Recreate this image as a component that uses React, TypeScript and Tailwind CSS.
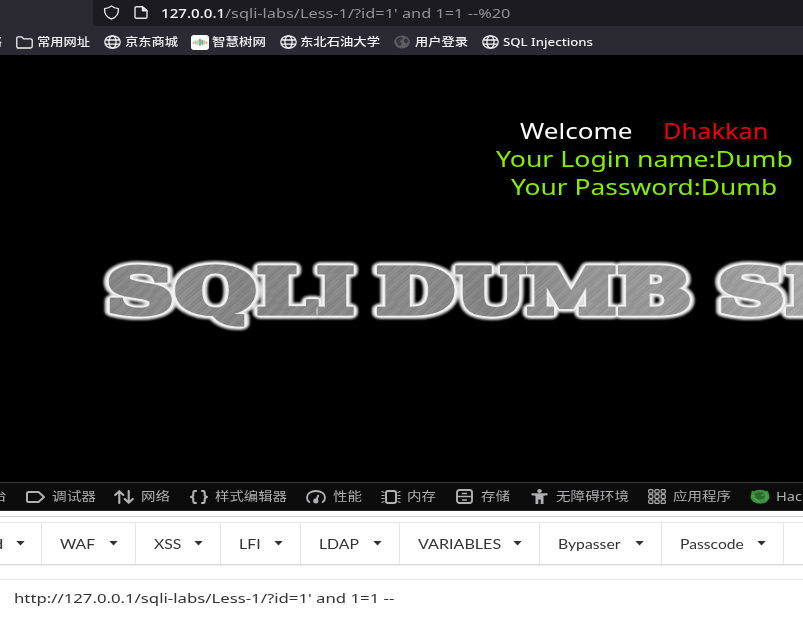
import { useLayoutEffect, useRef, useState, type ReactNode } from 'react';

/* Text stretched horizontally so that it fills exactly `w` pixels. */
function Fit({ w, className = '', children }: { w: number; className?: string; children: ReactNode }) {
  const ref = useRef<HTMLSpanElement>(null);
  const [scale, setScale] = useState(1);
  useLayoutEffect(() => {
    if (ref.current) setScale(w / ref.current.offsetWidth);
  }, [w]);
  return (
    <span className="block shrink-0" style={{ width: w }}>
      <span
        ref={ref}
        className={`inline-block origin-left whitespace-pre align-top ${className}`}
        style={{ transform: `scaleX(${scale})` }}
      >
        {children}
      </span>
    </span>
  );
}

const svgProps = { fill: 'none', stroke: 'currentColor', preserveAspectRatio: 'none' } as const;

const Shield = () => (
  <svg className="h-[15px] w-[17px]" viewBox="0 0 17 15" {...svgProps} strokeWidth="1.4" strokeLinejoin="round">
    <path d="M8.500 1C7 2.200 4.500 3.300 1.600 3.600C1.200 8 3.500 12.200 8.500 14C13.500 12.200 15.800 8 15.400 3.600C12.500 3.300 10 2.200 8.500 1Z" />
  </svg>
);
const Page = () => (
  <svg className="h-[13px] w-[14px]" viewBox="0 0 14 13" {...svgProps} strokeWidth="1.4" strokeLinejoin="round">
    <path d="M2.500 .8H8.500L13 4.800V11Q13 12.200 11.600 12.200H2.500Q1 12.200 1 11V2Q1 .8 2.500 .8Z" />
    <path d="M8.500 .8V4.800H13Z" fill="currentColor" />
  </svg>
);
const Folder = () => (
  <svg className="h-[13px] w-[17px]" viewBox="0 0 17 13" {...svgProps} strokeWidth="1.3" strokeLinejoin="round">
    <path d="M.8 2.300Q.8 .8 2.300 .8H5.500L7.600 2.800H14.700Q16.200 2.800 16.200 4.200V10.600Q16.200 12 14.700 12H2.300Q.8 12 .8 10.600Z" />
  </svg>
);
const Globe = () => (
  <svg className="h-[14px] w-[17px]" viewBox="0 0 17 14" {...svgProps} strokeWidth="1.3">
    <ellipse cx="8.500" cy="7" rx="7.700" ry="6.200" />
    <ellipse cx="8.500" cy="7" rx="3.600" ry="6.200" />
    <path d="M1.300 5H15.700M1.300 9.200H15.700" />
  </svg>
);
const DimGlobe = () => (
  <svg className="h-[14px] w-[16px]" viewBox="0 0 16 14" preserveAspectRatio="none">
    <ellipse cx="8" cy="7" rx="7.800" ry="6.500" fill="#5c5c62" />
    <path d="M3 3.500L7 2L9 3L7 5.500L5 6L7.500 8L6.500 11L4.500 10.500L2 6ZM10 4L13 3.500L14.500 7L12 8.500L10 7Z" fill="#34343b" />
  </svg>
);
const TreeIcon = () => (
  <svg className="h-[15px] w-[18px]" viewBox="0 0 18 15" preserveAspectRatio="none">
    <rect width="18" height="15" rx="3" fill="#fff" />
    <g strokeWidth="2" strokeLinecap="round">
      <path d="M2.500 8V7.500M15.500 8V7.500" stroke="#f4a58e" />
      <path d="M4.700 6.500V8.500" stroke="#8fc3f2" />
      <path d="M6.900 5.500V9" stroke="#e8cf6a" />
      <path d="M9 4.500V10" stroke="#6fc08c" />
      <path d="M11.200 5.500V9" stroke="#64a9ee" />
      <path d="M13.300 6.500V8.500" stroke="#f1b54a" />
    </g>
  </svg>
);

const TagIcon = () => (
  <svg className="h-[12px] w-[19px]" viewBox="0 0 19 12" {...svgProps} strokeWidth="2" strokeLinejoin="round">
    <path d="M2.500 1H12.500L18 6L12.500 11H2.500Q1 11 1 9.700V2.300Q1 1 2.500 1Z" />
  </svg>
);
const Arrows = () => (
  <svg className="h-[14px] w-[20px]" viewBox="0 0 20 14" {...svgProps} strokeWidth="2.100" strokeLinecap="round" strokeLinejoin="round">
    <path d="M5.300 13V1.300M1.200 5L5.300 1.200L9.300 5M14.700 1V12.700M10.700 9L14.700 12.800L18.800 9" />
  </svg>
);
const Braces = () => (
  <svg className="h-[14px] w-[18px]" viewBox="0 0 18 14" {...svgProps} strokeWidth="2.100" strokeLinecap="round" strokeLinejoin="round">
    <path d="M6 1H5Q3.300 1 3.300 2.800V5Q3.300 6.500 1 7Q3.300 7.500 3.300 9V11.200Q3.300 13 5 13H6M12 1H13Q14.700 1 14.700 2.800V5Q14.700 6.500 17 7Q14.700 7.500 14.700 9V11.200Q14.700 13 13 13H12" />
  </svg>
);
const Gauge = () => (
  <svg className="h-[14px] w-[20px]" viewBox="0 0 20 14" {...svgProps} strokeWidth="1.900" strokeLinecap="round">
    <path d="M3.300 12Q1 10.500 1 7.500C1 3.500 5 1 10 1S19 3.500 19 7.500Q19 10.500 16.700 12M10 10.500L12.300 5.500" />
    <ellipse cx="9.800" cy="11" rx="1.700" ry="1.500" fill="currentColor" />
  </svg>
);
const Chip = () => (
  <svg className="h-[14px] w-[20px]" viewBox="0 0 20 14" {...svgProps}>
    <rect x="5" y="1" width="10" height="12" rx="2" strokeWidth="2" />
    <path d="M3.500 2.500L.5 1.500M3.500 5.500H.5M3.500 8.500H.5M3.500 11.500L.5 12.500M16.500 2.500L19.500 1.500M16.500 5.500H19.500M16.500 8.500H19.500M16.500 11.500L19.500 12.500" strokeWidth="1.200" />
  </svg>
);
const Storage = () => (
  <svg className="h-[15px] w-[17px]" viewBox="0 0 17 15" {...svgProps}>
    <rect x="1" y="1" width="15" height="13" rx="2.500" strokeWidth="1.900" />
    <path d="M1.500 7.500H15.500M6 4.500H11M6 11H11" strokeWidth="1.300" />
  </svg>
);
const Person = () => (
  <svg className="h-[15px] w-[17px]" viewBox="0 0 17 15" preserveAspectRatio="none" fill="currentColor">
    <ellipse cx="8.500" cy="2" rx="2.300" ry="1.900" />
    <path d="M.8 4.300H16.200Q17.200 5.200 16.200 6.200L12.500 6.800V15H9.700V10.500H7.300V15H4.500V6.800L.8 6.200Q-.2 5.200 .8 4.300Z" />
  </svg>
);
const AppGrid = () => (
  <svg className="h-[15px] w-[18px]" viewBox="0 0 18 15" {...svgProps} strokeWidth="1.200">
    {[0, 1, 2].map((r) =>
      [0, 1, 2].map((c) => (
        <rect key={`${r}${c}`} x={0.7 + c * 6.2} y={0.6 + r * 5.1} width="4.200" height="3.600" rx="1" />
      )),
    )}
  </svg>
);
const Firefox = () => (
  <svg className="h-[15px] w-[20px]" viewBox="0 0 20 15" preserveAspectRatio="none">
    <ellipse cx="10" cy="7.700" rx="9.600" ry="7" fill="#3c8f3e" />
    <path d="M1 6L1.800 1.500L5 3ZM14 2L18 2L19 6Z" fill="#3c8f3e" />
    <path d="M5 4.500Q10 2 14 4.500Q11 5 10.500 6.500Q13.500 8 15 6Q15 10.500 10 10.500Q5 10 5 4.500Z" fill="#286b2c" />
    <path d="M2.500 6Q4 11.500 10 12.500M15.500 3.500Q18.500 7 15.500 11" fill="none" stroke="#5cac53" strokeWidth="1" />
  </svg>
);

const bookmarks = [
  { icon: <Folder />, text: '常用网址', slot: 'w-[88px]', iw: 'w-[21px]', w: 53 },
  { icon: <Globe />, text: '京东商城', slot: 'w-[87px]', iw: 'w-[21px]', w: 53 },
  { icon: <TreeIcon />, text: '智慧树网', slot: 'w-[89px]', iw: 'w-[21px]', w: 54 },
  { icon: <Globe />, text: '东北石油大学', slot: 'w-[114px]', iw: 'w-[20px]', w: 80 },
  { icon: <DimGlobe />, text: '用户登录', slot: 'w-[88px]', iw: 'w-[21px]', w: 53 },
  { icon: <Globe />, text: 'SQL Injections', slot: 'w-[120px]', iw: 'w-[21px]', w: 90 },
];

const tools = [
  { icon: <TagIcon />, text: '调试器', slot: 'w-[88px]', iw: 'w-[26px]', w: 44 },
  { icon: <Arrows />, text: '网络', slot: 'w-[76px]', iw: 'w-[27px]', w: 29 },
  { icon: <Braces />, text: '样式编辑器', slot: 'w-[116px]', iw: 'w-[25px]', w: 72 },
  { icon: <Gauge />, text: '性能', slot: 'w-[75px]', iw: 'w-[27px]', w: 29 },
  { icon: <Chip />, text: '内存', slot: 'w-[75px]', iw: 'w-[26px]', w: 29 },
  { icon: <Storage />, text: '存储', slot: 'w-[75px]', iw: 'w-[25px]', w: 29 },
  { icon: <Person />, text: '无障碍环境', slot: 'w-[117px]', iw: 'w-[25px]', w: 73 },
  { icon: <AppGrid />, text: '应用程序', slot: 'w-[102px]', iw: 'w-[25px]', w: 58 },
  { icon: <Firefox />, text: 'HackBar', slot: 'w-[90px]', iw: 'w-[26px]', w: 57 },
];

const menus = [
  { text: 'WAF', slot: 'w-[94px]', w: 35 },
  { text: 'XSS', slot: 'w-[85px]', w: 28 },
  { text: 'LFI', slot: 'w-[80px]', w: 22 },
  { text: 'LDAP', slot: 'w-[99px]', w: 40 },
  { text: 'VARIABLES', slot: 'w-[140px]', w: 83 },
  { text: 'Bypasser', slot: 'w-[122px]', w: 63 },
  { text: 'Passcode', slot: 'w-[122px]', w: 64 },
];

const Caret = () => (
  <svg className="h-[5px] w-[9px] shrink-0" viewBox="0 0 9 5" preserveAspectRatio="none">
    <path d="M.3 0H8.700L4.500 4.600Z" fill="#333" />
  </svg>
);

/* Title letters: character, left edge, advance width. */
const letters: [string, number, number][] = [
  ['S', 106.5, 67],
  ['Q', 175, 81],
  ['L', 257, 60],
  ['I', 317, 37],
  ['D', 376.5, 78],
  ['U', 456, 69],
  ['M', 527, 89],
  ['B', 617.5, 73.5],
  ['S', 718, 66.5],
  ['E', 785.5, 65],
];

function Title() {
  const glyph = ([ch, x, w]: [string, number, number], i: number) => (
    <text key={i} x={x} y="63" textLength={w} lengthAdjust="spacingAndGlyphs">
      {ch}
    </text>
  );
  const glyphs = letters.map(glyph);
  return (
    <svg className="block h-[90px] w-[803px] font-['DejaVu_Serif',serif] text-[62px] font-bold" viewBox="0 0 803 90">
      <defs>
        <linearGradient id="steel" gradientUnits="userSpaceOnUse" x1="100" y1="0" x2="810" y2="60">
          <stop offset="0" stopColor="#828282" />
          <stop offset=".12" stopColor="#8c8c8c" />
          <stop offset=".2" stopColor="#828282" />
          <stop offset=".45" stopColor="#8a8a8a" />
          <stop offset=".55" stopColor="#808080" />
          <stop offset=".68" stopColor="#9a9a9a" />
          <stop offset=".85" stopColor="#9e9e9e" />
          <stop offset="1" stopColor="#b4b4b4" />
        </linearGradient>
        <pattern id="brush" width="90" height="9" patternUnits="userSpaceOnUse" patternTransform="rotate(-40)">
          <rect width="90" height="9" fill="#8a8a8a" />
          <path d="M0 1H34M50 4H88M12 7H60" stroke="#b8b8b8" strokeWidth="1" />
          <path d="M20 2.500H75M0 5.500H40M60 8H90" stroke="#686868" strokeWidth="1" />
        </pattern>
        <filter id="glow" x="-5%" y="-30%" width="110%" height="160%">
          <feGaussianBlur stdDeviation="1.300" />
        </filter>
      </defs>
      <g fill="#fff" stroke="#ddd" strokeWidth="12" strokeLinejoin="round" filter="url(#glow)">{glyphs}</g>
      <g fill="#fff" stroke="#f4f4f4" strokeWidth="8.500" strokeLinejoin="round">{glyphs}</g>
      {letters.map((l, i) => (
        <g key={i}>
          <g fill="#ddd" stroke="#e6e6e6" strokeWidth="6.500" strokeLinejoin="round">{glyph(l, i)}</g>
          <g fill="url(#steel)" stroke="url(#steel)" strokeWidth="5">{glyph(l, i)}</g>
          <g fill="url(#brush)" stroke="url(#brush)" strokeWidth="5" opacity=".3">{glyph(l, i)}</g>
        </g>
      ))}
    </svg>
  );
}

export default function App() {
  return (
    <div className="flex h-[625px] w-[803px] flex-col overflow-hidden bg-black font-['Noto_Sans','Noto_Sans_CJK_SC',sans-serif]">
      <header className="flex h-[55px] shrink-0 flex-col bg-[#2b2a33]">
        <div className="ml-[93px] flex h-[26px] items-center rounded-bl bg-[#1c1b22] pl-[9.5px] text-[#e4e4e8]">
          <div className="w-[31.500px] pb-px"><Shield /></div>
          <div className="w-[27px] pb-px"><Page /></div>
          <Fit w={64} className="text-[12.5px] font-medium leading-[27px] text-[#f6f6fa]">127.0.0.1</Fit>
          <Fit w={286} className="text-[12.5px] leading-[27px] text-[#929298]">/sqli-labs/Less-1/?id=1' and 1=1 --%20</Fit>
        </div>
        <nav className="flex h-[29px] items-center pt-[3px] text-[11px] font-medium leading-4 text-[#f2f2f6]">
          <div className="flex w-[16px] shrink-0">
            <div className="-ml-[11px]"><Fit w={13}>络</Fit></div>
          </div>
          {bookmarks.map((b) => (
            <div key={b.text} className={`flex shrink-0 items-center ${b.slot}`}>
              <div className={`shrink-0 ${b.iw}`}>{b.icon}</div>
              <Fit w={b.w}>{b.text}</Fit>
            </div>
          ))}
        </nav>
      </header>

      <main className="flex h-[427px] shrink-0 flex-col bg-black">
        <div className="flex h-[195px] flex-col pl-[485px] pt-[62px] text-[21px] leading-[28px] text-[#84f000]">
          <div className="flex gap-[30px] pl-[35px]">
            <Fit w={113} className="text-white">Welcome</Fit>
            <Fit w={105} className="text-[#f00000]">Dhakkan</Fit>
          </div>
          <div className="pl-[11px]"><Fit w={297}>Your Login name:Dumb</Fit></div>
          <div className="pl-[26px]"><Fit w={266}>Your Password:Dumb</Fit></div>
        </div>
        <Title />
      </main>

      <nav className="flex h-[29px] shrink-0 items-center border-b border-t border-b-[#28282b] border-t-[#3b3b3e] bg-[#0c0c0d] text-[12px] leading-5 text-[#b1b1b3]">
        <div className="flex w-[26px] shrink-0">
          <div className="-ml-[8px]"><Fit w={15}>台</Fit></div>
        </div>
        {tools.map((t) => (
          <div key={t.text} className={`flex shrink-0 items-center ${t.slot}`}>
            <div className={`shrink-0 ${t.iw}`}>{t.icon}</div>
            <Fit w={t.w}>{t.text}</Fit>
          </div>
        ))}
      </nav>

      <section className="flex grow flex-col bg-white text-[#333]">
        <div className="h-[6px] shrink-0 border-b border-[#cfcfcf]" />
        <div className="mt-[5px] flex h-[43px] shrink-0 border-b border-t border-b-[#d9d9d9] border-t-[#ebebeb] font-['Lato',sans-serif] text-[13px] leading-[42px] shadow-[0_1px_1px_#eee]">
          <div className="flex w-[42px] shrink-0 items-center border-r border-[#e6e6e6]">
            <div className="-ml-[7px] w-[23px]"><Fit w={10}>d</Fit></div>
            <Caret />
          </div>
          {menus.map((m) => (
            <div key={m.text} className={`flex shrink-0 items-center justify-between border-r border-[#e6e6e6] pl-[18px] pr-[17px] ${m.slot}`}>
              <Fit w={m.w}>{m.text}</Fit>
              <Caret />
            </div>
          ))}
        </div>
        <div className="mt-[14px] grow border-t border-[#ebebeb] pl-[14px] pt-[8px]">
          <Fit w={380} className="text-[13px] leading-5">{"http://127.0.0.1/sqli-labs/Less-1/?id=1' and 1=1 --"}</Fit>
        </div>
      </section>
    </div>
  );
}
